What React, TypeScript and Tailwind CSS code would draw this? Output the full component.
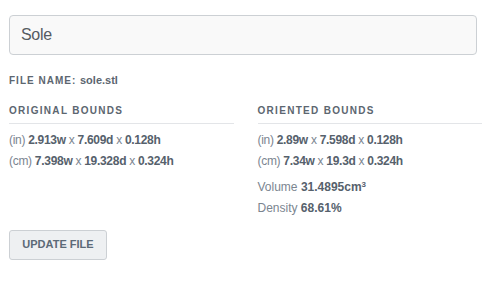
import React from 'react';

const font = { fontFamily: '"Liberation Sans", Arial, sans-serif' };

const Dim = ({ unit, w, d, h }: { unit: string; w: string; d: string; h: string }) => (
  <div className="text-[12px] leading-[21px] tracking-[-0.3px] text-[#7b8590]">
    <span>({unit})</span>{' '}
    <span className="font-bold text-[#56616c]">{w}w</span> x{' '}
    <span className="font-bold text-[#56616c]">{d}d</span> x{' '}
    <span className="font-bold text-[#56616c]">{h}h</span>
  </div>
);

const Heading = ({ children }: { children: React.ReactNode }) => (
  <div className="text-[10px] font-bold uppercase tracking-[1.3px] text-[#5c6670] pb-[5px] border-b border-[#e3e5e8] mb-[6px]">
    {children}
  </div>
);

export default function App() {
  return (
    <div className="w-[491px] h-[287px] bg-white px-[9px] pt-[15px]" style={font}>
      <input
        defaultValue="Sole"
        className="block w-[468px] h-[40px] rounded-[4px] border border-[#ccd0d4] bg-[#f9f9f9] pl-[11px] pr-[10px] text-[16px] tracking-[-0.3px] text-[#555b62] outline-none"
        style={font}
      />
      <div className="mt-[17px] text-[10px] font-bold uppercase tracking-[1px] text-[#5c6670]">
        File name: <span className="normal-case tracking-normal text-[11px]">sole.stl</span>
      </div>
      <div className="mt-[14px] grid grid-cols-2 gap-[24px]">
        <div>
          <Heading>Original Bounds</Heading>
          <Dim unit="in" w="2.913" d="7.609" h="0.128" />
          <Dim unit="cm" w="7.398" d="19.328" h="0.324" />
        </div>
        <div>
          <Heading>Oriented Bounds</Heading>
          <Dim unit="in" w="2.89" d="7.598" h="0.128" />
          <Dim unit="cm" w="7.34" d="19.3" h="0.324" />
          <div className="mt-[5px] text-[12px] leading-[21px] text-[#7b8590]">
            Volume{' '}
            <span className="font-bold text-[#56616c]">
              31.4895cm<sup className="text-[8px]">3</sup>
            </span>
          </div>
          <div className="text-[12px] leading-[21px] text-[#7b8590]">
            Density <span className="font-bold text-[#56616c]">68.61%</span>
          </div>
        </div>
      </div>
      <button
        className="block mt-[11px] h-[30px] w-[98px] rounded-[3px] border border-[#ccd0d4] bg-[#eef0f2] text-[11px] font-bold uppercase text-[#5c6a78]"
        style={font}
      >
        Update File
      </button>
    </div>
  );
}
